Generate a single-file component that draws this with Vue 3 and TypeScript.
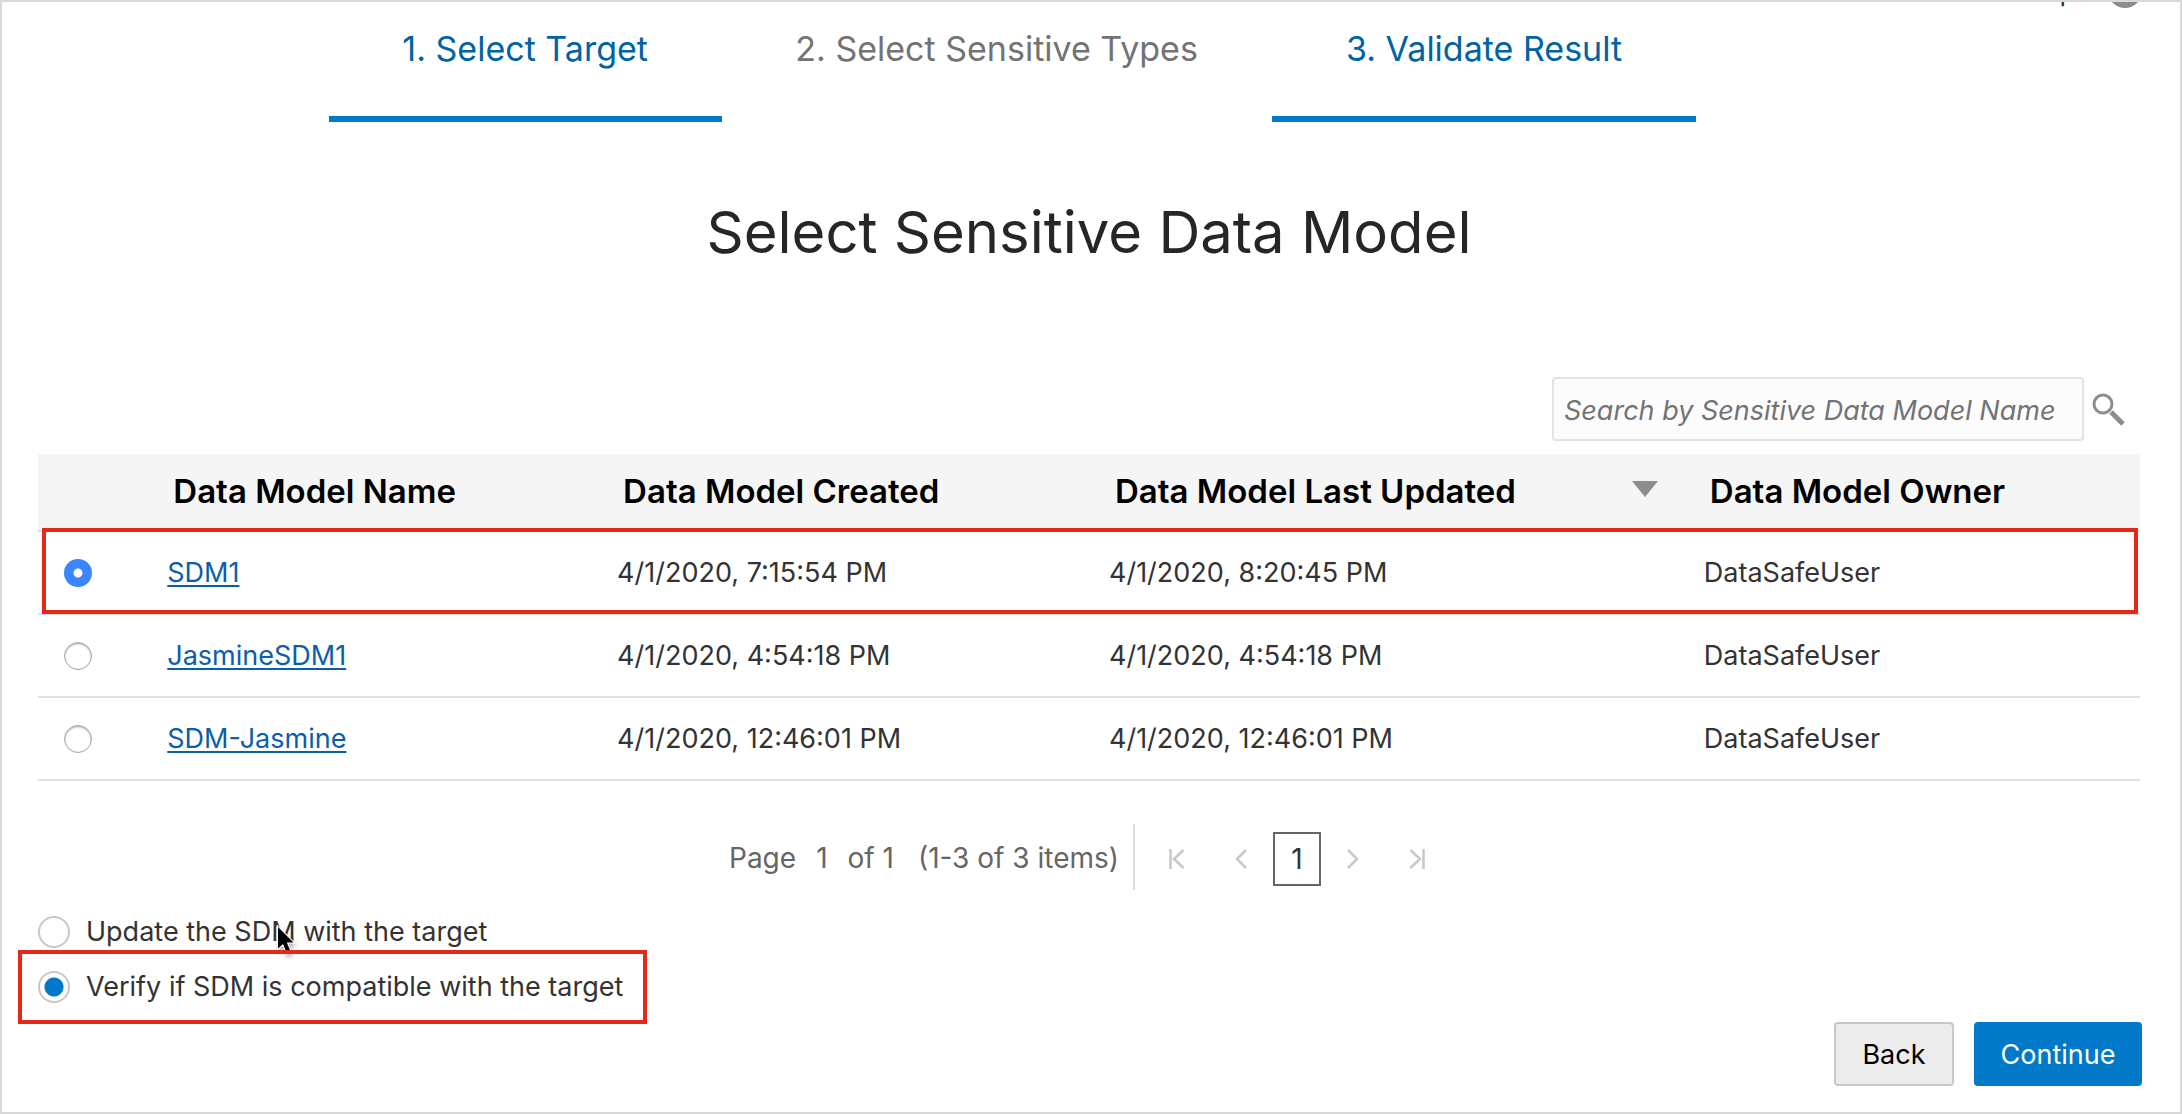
<script setup lang="ts">
import { ref } from 'vue'

interface Step {
  label: string
  linked: boolean
}

interface DataModel {
  name: string
  created: string
  updated: string
  owner: string
}

const steps: Step[] = [
  { label: '1. Select Target', linked: true },
  { label: '2. Select Sensitive Types', linked: false },
  { label: '3. Validate Result', linked: true },
]

const models: DataModel[] = [
  { name: 'SDM1', created: '4/1/2020, 7:15:54 PM', updated: '4/1/2020, 8:20:45 PM', owner: 'DataSafeUser' },
  { name: 'JasmineSDM1', created: '4/1/2020, 4:54:18 PM', updated: '4/1/2020, 4:54:18 PM', owner: 'DataSafeUser' },
  { name: 'SDM-Jasmine', created: '4/1/2020, 12:46:01 PM', updated: '4/1/2020, 12:46:01 PM', owner: 'DataSafeUser' },
]

const selectedModel = ref('SDM1')
const action = ref('verify')
const query = ref('')
</script>

<template>
  <div class="page">
    <header class="topbar">
      <a class="help" href="#">Help</a>
      <span class="help-dot"></span>
    </header>

    <nav class="steps" aria-label="Discovery steps">
      <template v-for="step in steps" :key="step.label">
        <a v-if="step.linked" class="step linked" href="#">{{ step.label }}</a>
        <span v-else class="step">{{ step.label }}</span>
      </template>
    </nav>

    <main class="content">
      <h1>Select Sensitive Data Model</h1>

      <form class="search" role="search" @submit.prevent>
        <input
          v-model="query"
          type="text"
          aria-label="Search by Sensitive Data Model Name"
          placeholder="Search by Sensitive Data Model Name"
        />
        <button type="submit" aria-label="Search">
          <svg viewBox="0 0 33 34" width="33" height="34" fill="none" stroke="#8b8d8f">
            <circle cx="11" cy="12" r="9" stroke-width="3" />
            <path d="M19 20 L31 32" stroke-width="5" />
          </svg>
        </button>
      </form>

      <table>
        <colgroup>
          <col class="c-pick" />
          <col class="c-name" />
          <col class="c-created" />
          <col class="c-updated" />
          <col />
        </colgroup>
        <thead>
          <tr>
            <th aria-label="Selection"></th>
            <th scope="col">Data Model Name</th>
            <th scope="col">Data Model Created</th>
            <th scope="col" aria-sort="descending">
              <div class="sorted">
                Data Model Last Updated
                <svg viewBox="0 0 26 16" width="26" height="16"><path d="M0 0H26L13 16Z" fill="#8b8d8f" /></svg>
              </div>
            </th>
            <th scope="col">Data Model Owner</th>
          </tr>
        </thead>
        <tbody>
          <tr v-for="m in models" :key="m.name" :class="{ marked: m.name === 'SDM1' }">
            <td class="pick">
              <input v-model="selectedModel" type="radio" name="model" :value="m.name" :aria-label="m.name" />
            </td>
            <td><a href="#">{{ m.name }}</a></td>
            <td>{{ m.created }}</td>
            <td>{{ m.updated }}</td>
            <td>{{ m.owner }}</td>
          </tr>
        </tbody>
      </table>

      <div class="pager">
        <div class="pager-text">
          <span>Page</span><span>1</span><span>of 1</span><span class="range">(1-3 of 3 items)</span>
        </div>
        <div class="pager-nav">
          <button type="button" aria-label="First page">
            <svg viewBox="0 0 16 20" width="16" height="20"><path d="M1.5 0V20M14.5 1L5 10L14.5 19" /></svg>
          </button>
          <button type="button" aria-label="Previous page">
            <svg viewBox="0 0 12 20" width="12" height="20"><path d="M11 1L2 10L11 19" /></svg>
          </button>
          <button type="button" class="current" aria-current="page">1</button>
          <button type="button" aria-label="Next page">
            <svg viewBox="0 0 12 20" width="12" height="20"><path d="M1 1L10 10L1 19" /></svg>
          </button>
          <button type="button" aria-label="Last page">
            <svg viewBox="0 0 16 20" width="16" height="20"><path d="M14.5 0V20M1.5 1L11 10L1.5 19" /></svg>
          </button>
        </div>
      </div>

      <div class="options">
        <label class="option">
          <input v-model="action" type="radio" name="action" value="update" />
          Update the SDM with the target
          <svg class="pointer" viewBox="0 0 20 32" width="20" height="32">
            <path
              d="M2 2V23.500L7 19L11 28.500L14.800 27L10.800 17.500H17.500Z"
              fill="#000"
              stroke="#fff"
              stroke-width="2"
              paint-order="stroke"
            />
          </svg>
        </label>
        <label class="option marked-option">
          <input v-model="action" type="radio" name="action" value="verify" />
          Verify if SDM is compatible with the target
        </label>
      </div>
    </main>

    <footer class="actions">
      <button type="button" class="back">Back</button>
      <button type="button" class="continue">Continue</button>
    </footer>
  </div>
</template>

<style>
body {
  background: #fff;
}
</style>

<style scoped>
.page {
  box-sizing: border-box;
  display: flex;
  flex-direction: column;
  min-height: 100vh;
  border: 2px solid #d9d9d9;
  background: #fff;
  color: #333;
  font-family: Inter, "Liberation Sans", sans-serif;
  font-size: 27px;
  line-height: 34px;
}

button,
input {
  font: inherit;
  margin: 0;
}

.topbar {
  display: flex;
  justify-content: flex-end;
  align-items: flex-end;
  gap: 32px;
  height: 7px;
  padding-right: 38px;
  overflow: hidden;
}

.help {
  color: #333;
  text-decoration: none;
}

.help-dot {
  flex: none;
  width: 34px;
  height: 34px;
  margin-bottom: 1px;
  border-radius: 50%;
  background: #8b8d8f;
}

.steps {
  display: grid;
  grid-template-columns: 393fr 550fr 425fr;
  margin: 0 22.2% 0 15%;
}

.step {
  padding: 20px 0 47px;
  border-bottom: 6px solid transparent;
  color: #737373;
  font-size: 34px;
  line-height: 40px;
  text-align: center;
  text-decoration: none;
}

.step.linked {
  border-color: #0079c8;
  color: #0063a3;
}

.content {
  padding: 0 40px 0 36px;
}

h1 {
  margin: 74px 0 109px;
  color: #262626;
  font-size: 58px;
  font-weight: 400;
  line-height: 72px;
  text-align: center;
}

.search {
  display: flex;
  justify-content: flex-end;
  align-items: center;
  gap: 8px;
  margin-bottom: 13px;
  padding-right: 15px;
}

.search input {
  box-sizing: border-box;
  width: 532px;
  height: 64px;
  padding: 2px 10px 0;
  border: 2px solid #e3e3e3;
  border-radius: 4px;
  background: #fcfcfc;
  color: #333;
}

.search input::placeholder {
  color: #737373;
  font-style: italic;
  opacity: 1;
}

.search button {
  display: flex;
  padding: 0;
  border: 0;
  background: none;
}

table {
  width: 100%;
  table-layout: fixed;
  border-collapse: separate;
  border-spacing: 0;
}

.c-pick {
  width: 5.2%;
}

.c-name {
  width: 21.4%;
}

.c-created {
  width: 23.4%;
}

.c-updated {
  width: 28.3%;
}

th,
td {
  box-sizing: border-box;
  border-bottom: 2px solid #e0e0e0;
  text-align: left;
  white-space: nowrap;
}

th {
  height: 78px;
  padding: 0 26px 2px;
  background: #f5f5f5;
  color: #000;
  font-size: 33px;
  font-weight: 600;
  line-height: 40px;
}

.sorted {
  display: flex;
  justify-content: space-between;
  align-items: center;
}

.sorted svg {
  margin-bottom: 4px;
}

td {
  height: 83px;
  padding: 0 20px;
}

td a {
  color: #0a5ead;
  text-decoration: underline;
  text-decoration-thickness: 2px;
  text-underline-offset: 3px;
}

td.pick {
  padding: 0 26px;
}

.pick input {
  appearance: none;
  display: block;
  box-sizing: border-box;
  width: 28px;
  height: 28px;
  border: 1px solid #a6a6a6;
  border-radius: 50%;
  background: #fff;
  box-shadow: inset 0 1px 2px rgba(0, 0, 0, 0.35);
}

.pick input:checked {
  border: 0;
  background: radial-gradient(circle, #fff 0 4px, #3b86ff 5px);
  box-shadow: none;
}

tr.marked {
  position: relative;
}

.marked .pick::after {
  content: "";
  position: absolute;
  inset: -4px 2px 1px 4px;
  border: 4px solid #e4291b;
  pointer-events: none;
}

.pager {
  display: flex;
  justify-content: center;
  height: 66px;
  margin-top: 43px;
  color: #666;
  font-size: 28px;
}

.pager-text {
  display: flex;
  align-items: center;
  gap: 20px;
  padding: 2px 14px 0 0;
  border-right: 2px solid #d9d9d9;
}

.range {
  margin-left: 4px;
}

.pager-nav {
  display: flex;
  align-items: center;
  padding: 4px 0 0 10px;
}

.pager-nav button {
  display: flex;
  justify-content: center;
  align-items: center;
  box-sizing: border-box;
  width: 64px;
  height: 54px;
  padding: 0;
  border: 0;
  background: none;
}

.pager-nav svg {
  fill: none;
  stroke: #c8c8c8;
  stroke-width: 2.500;
}

.pager-nav .current {
  width: 48px;
  border: 2px solid #666;
  color: #333;
}

.options {
  display: flex;
  flex-direction: column;
  align-items: flex-start;
  margin-top: 14px;
}

.option {
  position: relative;
  display: flex;
  align-items: center;
  gap: 16px;
  height: 55px;
}

.option input {
  appearance: none;
  box-sizing: border-box;
  width: 32px;
  height: 32px;
  border: 2px solid #c8c8c8;
  border-radius: 50%;
  background: #fff;
}

.option input:checked {
  background: radial-gradient(circle, #0079c8 0 9px, #fff 10px);
}

.pointer {
  position: absolute;
  left: 238px;
  top: 21px;
  filter: drop-shadow(1px 3px 2px rgba(0, 0, 0, 0.3));
}

.marked-option::after {
  content: "";
  position: absolute;
  inset: -9px -24px -10px -20px;
  border: 4px solid #e4291b;
  pointer-events: none;
}

.actions {
  display: flex;
  justify-content: flex-end;
  gap: 20px;
  padding: 8px 38px 26px;
}

.actions button {
  box-sizing: border-box;
  height: 64px;
  padding: 2px 0 0;
  border: 2px solid #c8c8c8;
  border-radius: 4px;
}

.back {
  width: 120px;
  background: #ececec;
  color: #000;
}

.actions .continue {
  width: 168px;
  border-color: #0079c8;
  background: #0079c8;
  color: #fff;
}
</style>
